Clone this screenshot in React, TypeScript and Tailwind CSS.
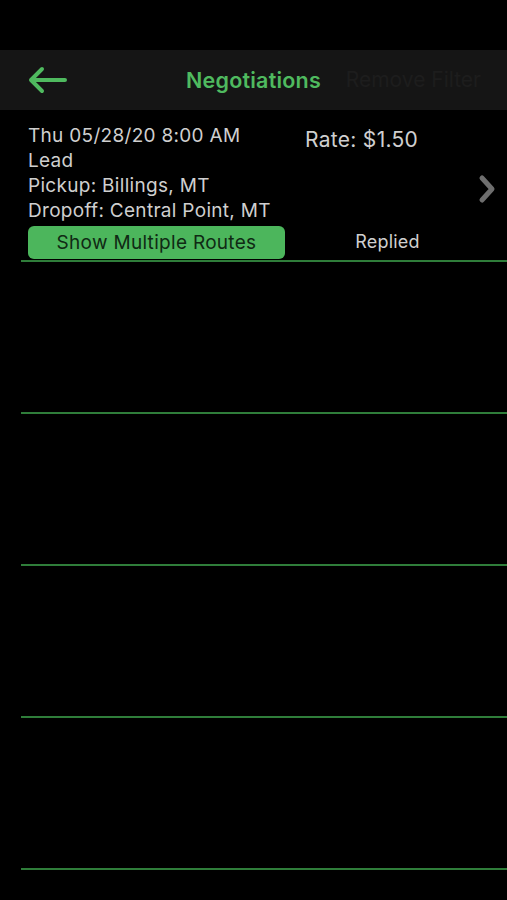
import React from "react";

const font = { fontFamily: "Inter, 'Liberation Sans', sans-serif" };

export default function App() {
  return (
    <div className="w-[507px] h-[900px] bg-black overflow-hidden" style={font}>
      <div className="h-[50px] bg-black" />
      <div className="h-[60px] bg-[#151515] flex items-center relative">
        <div className="pl-[27px] flex items-center">
          <svg width="40" height="28" viewBox="0 0 40 28" fill="none">
            <path d="M38 14H4M15 3L4 14l11 11" stroke="#4fba5f" strokeWidth="4" strokeLinecap="round" strokeLinejoin="round" />
          </svg>
        </div>
        <div className="absolute left-0 right-0 top-0 bottom-0 flex items-center justify-center pointer-events-none">
          <span className="text-[21.5px] font-semibold tracking-[0.2px] text-[#4fba5f]">Negotiations</span>
        </div>
        <span className="ml-auto mr-[26px] text-[21px] text-[#1d1d1d]">Remove Filter</span>
      </div>
      <div className="ml-[21px]">
        <div className="h-[152px] border-b-2 border-[#2f7d3a] flex">
          <div className="w-[264px] pl-[7px] pt-[13px] flex flex-col text-[19px] tracking-[0.3px] leading-[25px] text-[#cfcfcf]">
            <span className="whitespace-nowrap">Thu 05/28/20 8:00 AM</span>
            <span>Lead</span>
            <span className="whitespace-nowrap">Pickup: Billings, MT</span>
            <span className="whitespace-nowrap">Dropoff: Central Point, MT</span>
            <div className="mt-[3px] h-[33px] rounded-[6px] bg-[#4cb65c] flex items-center justify-center text-[19px] tracking-[0.3px] text-[#102a14] whitespace-nowrap">
              Show Multiple Routes
            </div>
          </div>
          <div className="flex-1 flex flex-col">
            <span className="pl-[20px] mt-[16px] text-[21px] tracking-[0.3px] leading-[28px] text-[#cfcfcf] whitespace-nowrap">Rate: $1.50</span>
            <div className="flex-1 flex items-center justify-end pr-[10px]">
              <svg width="20" height="32" viewBox="0 0 20 32" fill="none">
                <path d="M5 5l10 11-10 11" stroke="#6e6e6e" strokeWidth="5" strokeLinecap="round" strokeLinejoin="round" />
              </svg>
            </div>
            <div className="h-[36px] mb-[1px] mr-[17px] flex items-center justify-center text-[18px] tracking-[0.2px] text-[#cfcfcf]">Replied</div>
          </div>
        </div>
        <div className="h-[152px] border-b-2 border-[#2f7d3a]" />
        <div className="h-[152px] border-b-2 border-[#2f7d3a]" />
        <div className="h-[152px] border-b-2 border-[#2f7d3a]" />
        <div className="h-[152px] border-b-2 border-[#2f7d3a]" />
      </div>
    </div>
  );
}
